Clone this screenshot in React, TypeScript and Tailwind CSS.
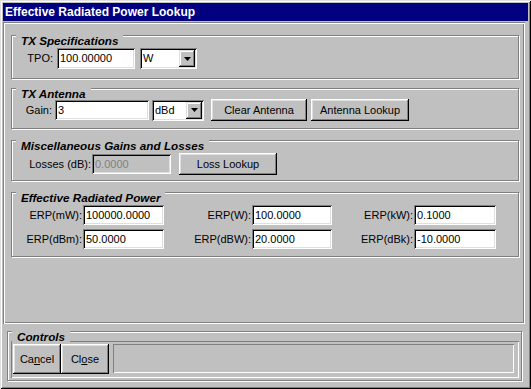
import React from "react";

const FONT = "font-['Liberation_Sans',Arial,sans-serif]";

function Group({
  title,
  className = "",
  children,
}: {
  title: string;
  className?: string;
  children?: React.ReactNode;
}) {
  return (
    <div
      className={`relative border border-[#808080] shadow-[inset_1px_1px_0_#fff,1px_1px_0_#fff] ${className}`}
    >
      <span className="absolute top-[-2px] left-[4px] px-[5px] bg-[#c0c0c0] text-[11.7px] leading-[13px] font-bold italic text-black whitespace-nowrap">
        {title}
      </span>
      {children}
    </div>
  );
}

function Field({
  value,
  className = "",
  disabled = false,
}: {
  value: string;
  className?: string;
  disabled?: boolean;
}) {
  return (
    <div
      className={`flex items-center h-[20px] pl-[3px] text-[11px] whitespace-nowrap shadow-[inset_1px_1px_0_#808080,inset_-1px_-1px_0_#fff,inset_2px_2px_0_#000,inset_-2px_-2px_0_#dfdfdf] ${
        disabled ? "bg-[#c0c0c0] text-[#808080]" : "bg-white text-black"
      } ${className}`}
    >
      {value}
    </div>
  );
}

function Select({ value, className = "" }: { value: string; className?: string }) {
  return (
    <div
      className={`flex h-[21px] p-[2px] bg-white shadow-[inset_1px_1px_0_#808080,inset_-1px_-1px_0_#fff,inset_2px_2px_0_#000,inset_-2px_-2px_0_#dfdfdf] ${className}`}
    >
      <div className="flex-1 flex items-center pl-[1px] text-[11px] text-black">{value}</div>
      <div className="w-[16px] flex items-center justify-center bg-[#c0c0c0] shadow-[inset_-1px_-1px_0_#000,inset_1px_1px_0_#dfdfdf,inset_-2px_-2px_0_#808080,inset_2px_2px_0_#fff]">
        <svg width="7" height="4" viewBox="0 0 7 4">
          <polygon points="0,0 7,0 3.5,4" fill="#000" />
        </svg>
      </div>
    </div>
  );
}

function Btn({ children, className = "" }: { children: React.ReactNode; className?: string }) {
  return (
    <div
      className={`flex items-center justify-center bg-[#c0c0c0] text-[11px] text-black whitespace-nowrap shadow-[inset_-1px_-1px_0_#000,inset_1px_1px_0_#fff,inset_-2px_-2px_0_#808080,inset_2px_2px_0_#dfdfdf] ${className}`}
    >
      {children}
    </div>
  );
}

function Label({ text, className = "" }: { text: string; className?: string }) {
  return <div className={`text-right text-[11px] text-black whitespace-nowrap ${className}`}>{text}</div>;
}

export default function App() {
  return (
    <div
      className={`${FONT} w-[531px] h-[389px] bg-[#c0c0c0] p-[3px] flex flex-col shadow-[inset_1px_1px_0_#dfdfdf,inset_-1px_-1px_0_#000,inset_2px_2px_0_#fff,inset_-2px_-2px_0_#808080]`}
    >
      {/* Title bar */}
      <div className="h-[18px] bg-[#000080] flex items-center pl-[2px] text-white text-[12px] font-bold leading-none">
        Effective Radiated Power Lookup
      </div>

      {/* Top panel */}
      <div className="mt-[1px] w-[522px] h-[302px] flex flex-col pl-[8px] pt-[13px] shadow-[inset_1px_1px_0_#808080,inset_-1px_-1px_0_#fff,inset_2px_2px_0_#fff,inset_-2px_-2px_0_#808080]">
        <Group title="TX Specifications" className="w-[508px] h-[44px] pt-[12px]">
          <div className="flex items-center">
            <Label text="TPO:" className="w-[41px]" />
            <Field value="100.00000" className="ml-[4px] w-[78px] h-[21px]" />
            <Select value="W" className="ml-[5px] w-[57px]" />
          </div>
        </Group>

        <Group title="TX Antenna" className="mt-[9px] w-[508px] h-[41px] pt-[10px]">
          <div className="flex items-center h-[22px]">
            <Label text="Gain:" className="w-[40px]" />
            <Field value="3" className="ml-[3px] w-[94px]" />
            <Select value="dBd" className="ml-[3px] w-[52px]" />
            <Btn className="ml-[7px] w-[96px] h-[22px]">Clear Antenna</Btn>
            <Btn className="ml-[4px] w-[98px] h-[22px]">Antenna Lookup</Btn>
          </div>
        </Group>

        <Group title="Miscellaneous Gains and Losses" className="mt-[11px] w-[508px] h-[41px] pt-[12px]">
          <div className="flex items-center h-[22px]">
            <Label text="Losses (dB):" className="w-[79px]" />
            <Field value="0.0000" disabled className="ml-[1px] w-[79px]" />
            <Btn className="ml-[8px] w-[98px] h-[22px]">Loss Lookup</Btn>
          </div>
        </Group>

        <Group title="Effective Radiated Power" className="mt-[11px] w-[508px] h-[65px] pt-[12px]">
          <div className="flex flex-col gap-[4px]">
            <div className="flex items-center">
              <Label text="ERP(mW):" className="w-[70px]" />
              <Field value="100000.0000" className="ml-[1px] w-[81px]" />
              <Label text="ERP(W):" className="w-[87px]" />
              <Field value="100.0000" className="ml-[1px] w-[80px]" />
              <Label text="ERP(kW):" className="w-[81px]" />
              <Field value="0.1000" className="ml-[1px] w-[82px]" />
            </div>
            <div className="flex items-center">
              <Label text="ERP(dBm):" className="w-[70px]" />
              <Field value="50.0000" className="ml-[1px] w-[81px]" />
              <Label text="ERP(dBW):" className="w-[87px]" />
              <Field value="20.0000" className="ml-[1px] w-[80px]" />
              <Label text="ERP(dBk):" className="w-[81px]" />
              <Field value="-10.0000" className="ml-[1px] w-[82px]" />
            </div>
          </div>
        </Group>
      </div>

      {/* Controls */}
      <Group title="Controls" className="mt-[7px] ml-[4px] w-[515px] h-[50px] pt-[9px] pl-[3px]">
        <div className="w-[508px] h-[37px] flex pl-[2px] pt-[3px] shadow-[inset_1px_1px_0_#808080,inset_-1px_-1px_0_#fff]">
          <Btn className="w-[48px] h-[30px]">
            Ca<span className="underline">n</span>cel
          </Btn>
          <Btn className="w-[48px] h-[30px]">
            Cl<span className="underline">o</span>se
          </Btn>
          <div className="ml-[4px] w-[401px] h-[29px] shadow-[inset_1px_1px_0_#808080,inset_-1px_-1px_0_#fff]" />
        </div>
      </Group>
    </div>
  );
}
